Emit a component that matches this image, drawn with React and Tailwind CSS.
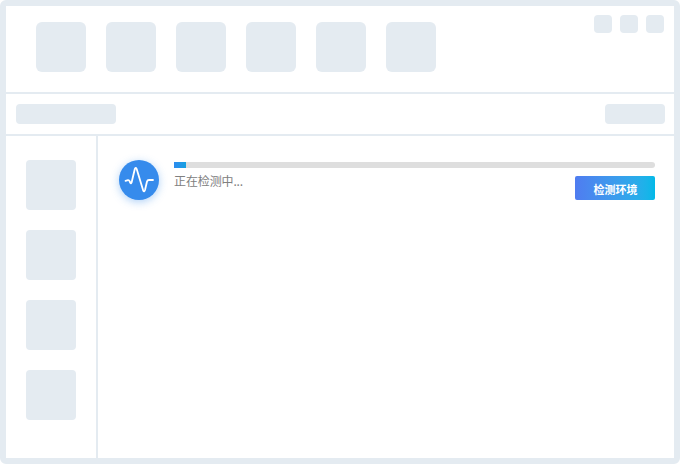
const topTiles = [0, 1, 2, 3, 4, 5];
const windowButtons = [0, 1, 2];
const sideTiles = [0, 1, 2, 3];

export default function App() {
    return (
        <div className="w-[680px] h-[464px] bg-white border-[6px] border-[#e4ebf1] rounded-md overflow-hidden flex flex-col font-['Noto_Sans_CJK_SC','Liberation_Sans',sans-serif]">
            <div className="h-[88px] shrink-0 border-b-2 border-[#e4ebf1] flex justify-between pl-[30px] pr-[10px]">
                <div className="flex gap-5 pt-4">
                    {topTiles.map((tile) => (
                        <div key={tile} className="w-[50px] h-[50px] rounded-md bg-[#e4ebf1]" />
                    ))}
                </div>
                <div className="flex gap-2 pt-[9px]">
                    {windowButtons.map((button) => (
                        <div key={button} className="w-[18px] h-[18px] rounded bg-[#e4ebf1]" />
                    ))}
                </div>
            </div>

            <div className="h-[42px] shrink-0 border-b-2 border-[#e4ebf1] flex justify-between items-center pl-[10px] pr-[9px]">
                <div className="w-[100px] h-5 rounded bg-[#e4ebf1]" />
                <div className="w-[60px] h-5 rounded bg-[#e4ebf1]" />
            </div>

            <div className="flex-1 flex min-h-0">
                <div className="w-[92px] shrink-0 border-r-2 border-[#e4ebf1] flex flex-col gap-5 pt-6 pl-5">
                    {sideTiles.map((tile) => (
                        <div key={tile} className="w-[50px] h-[50px] rounded bg-[#e4ebf1]" />
                    ))}
                </div>

                <div className="flex-1 flex items-start pt-6 pl-[21px] pr-[19px]">
                    <div className="w-10 h-10 shrink-0 rounded-full bg-[#368bec] shadow-[0_2px_8px_rgba(54,139,236,0.4)]">
                        <svg width="40" height="40" viewBox="0 0 40 40" fill="none" stroke="white" strokeWidth="1.8" strokeLinecap="round" strokeLinejoin="round">
                            <path d="M6.5 20.8 L9 20.2 Q10 20 10.6 21.2 L11.3 22.8 Q12 24 12.6 22.5 L15.8 9 Q16.6 6.8 17.6 8.8 L24.2 30.5 Q25.2 32.5 26 30 L28 21.5 Q28.4 20 30 20 L34 20" />
                        </svg>
                    </div>
                    <div className="flex-1 ml-[15px] pt-0.5">
                        <div className="h-1.5 rounded-r-full bg-[#dedede] overflow-hidden">
                            <div className="w-3 h-full bg-gradient-to-r from-[#2d8cf0] to-[#16a0e0]" />
                        </div>
                        <div className="flex justify-between items-start">
                            <span className="text-xs leading-[17px] mt-1 text-[#808080] tracking-[-0.01em]">正在检测中...</span>
                            <button className="w-20 h-6 mt-2 rounded-[2px] bg-gradient-to-r from-[#4f7cf0] to-[#00b9e8] text-white text-[11px] font-bold leading-6 pt-px pl-px text-center">
                                检测环境
                            </button>
                        </div>
                    </div>
                </div>
            </div>
        </div>
    );
}
